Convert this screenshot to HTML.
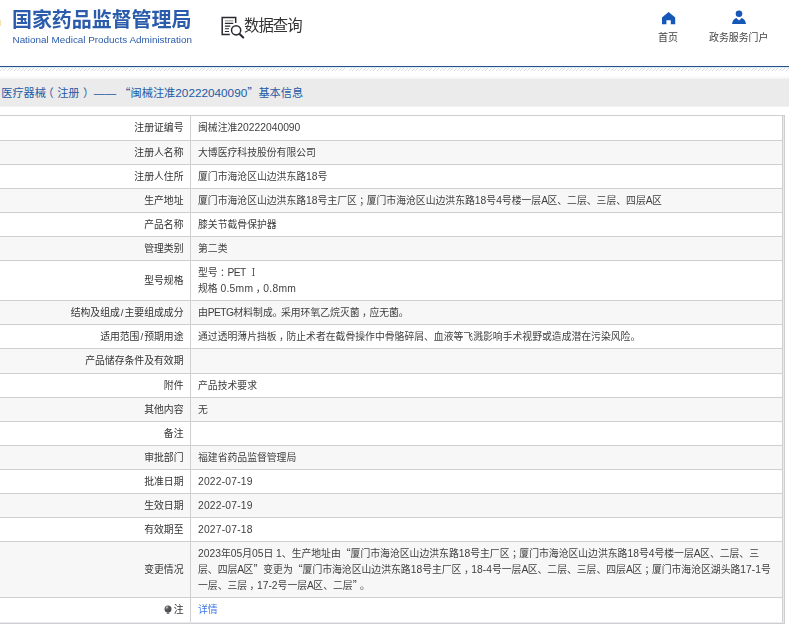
<!DOCTYPE html>
<html lang="zh-CN">
<head>
<meta charset="utf-8">
<title>国家药品监督管理局 数据查询</title>
<style>
html,body{margin:0;padding:0;background:#fff;}
body{width:789px;height:630px;overflow:hidden;position:relative;font-family:"Liberation Sans","Noto Sans CJK SC",sans-serif;color:#333;}
#wrap{position:absolute;left:0;top:0;width:789px;height:630px;opacity:.999;}
.abs{position:absolute;white-space:nowrap;}
.q{font-family:"Noto Sans CJK SC",sans-serif;}
#logo-cn{left:12px;top:5px;font-size:20px;font-weight:bold;color:#2b5cab;line-height:30px;letter-spacing:-0.07px;}
#logo-en{left:12.5px;top:33px;font-size:9.9px;color:#2b5cab;line-height:14px;}
#sj{left:244px;top:13.8px;font-size:15.4px;color:#333;line-height:24px;letter-spacing:-1px;}
#home-t{left:658px;top:29.8px;font-size:10px;color:#444;line-height:16px;}
#zw-t{left:709px;top:29.8px;font-size:9.9px;color:#444;line-height:16px;}
#blueline{left:0;top:66px;width:789px;height:1px;background:#2a5080;}
#hatch{left:0;top:68px;width:789px;height:3px;background:repeating-linear-gradient(135deg,#fff 0,#fff 1.55px,#dcdde0 1.55px,#dcdde0 2.25px,#fff 2.25px,#fff 2.47px);}
#tint{left:0;top:67px;width:789px;height:1px;background:#d8ecf9;}
#pre{left:0;top:76px;width:789px;height:3px;background:linear-gradient(#fff,#f3f3f3);}
#bar{left:0;top:79px;width:789px;height:27px;background:#ebebeb;border-bottom:1px solid #f1f1f1;}
#bar>span{position:absolute;left:1.2px;top:0;line-height:27px;font-size:11.2px;color:#1d5aa6;white-space:nowrap;}
#bar .n{font-size:11.75px;}
.r{position:absolute;left:0;width:782px;font-weight:400;font-size:9.83px;line-height:16px;white-space:nowrap;}
.r.g{background:#f7f7f7;}
.l{position:absolute;left:0;top:0;bottom:0;width:183.5px;display:flex;align-items:center;justify-content:flex-end;color:#333;}
.v{position:absolute;left:198px;top:0;bottom:0;right:0;display:flex;align-items:center;color:#404040;}
.r .n{font-size:10.3px;}
.r .d{letter-spacing:.2px;}
.r .u{font-size:10.3px;letter-spacing:-.6px;}
.r .m{letter-spacing:.3px;}
.rn{font-family:"Noto Serif CJK SC",serif;}
.c{margin-left:.25em;margin-right:-.25em;}
.pl{margin-left:-.3em;margin-right:.3em;}
.pr{margin-left:.3em;margin-right:-.3em;}
.p{margin-right:-1.7px;}
.pe{margin-left:2.5px;}
.s{padding:0 1px;}
.hb{position:absolute;left:0;width:785px;height:1px;background:#d0ced0;}
.vb{position:absolute;width:1px;background:#d0ced0;}
.bulb{display:inline-block;vertical-align:-1.6px;margin-right:1.2px;}
.r span span{line-height:0;}
a{color:#3b78e7;text-decoration:none;}
</style>
</head>
<body><div id="wrap">
<div class="abs" style="left:0;top:20px;width:1px;height:6px;background:#f3e2b3"></div>
<div class="abs" id="logo-cn">国家药品监督管理局</div>
<div class="abs" id="logo-en">National Medical Products Administration</div>
<svg class="abs" style="left:216.4px;top:10.3px" width="40" height="34" viewBox="0 0 40 34" fill="none" stroke="#2a2a32" stroke-width="1.5">
<path d="M19.7 13V7.6H6.2V24.6H13.8"/>
<path d="M8.9 10.8H17.3" stroke="#999" stroke-width="1.1"/><path d="M8.9 13.4H17.3M8.9 16.1H14.3M8.9 18.7H13M8.9 21.5H13" stroke-width="1.1"/>
<circle cx="20.1" cy="20.3" r="4.6"/><path d="M23.6 24.1L27.2 27.5" stroke-width="2.1" stroke-linecap="round"/>
</svg>
<div class="abs" id="sj">数据查询</div>
<svg class="abs" style="left:661px;top:10.5px" width="16" height="15" viewBox="0 0 16 15"><path d="M7.6 1.0L1.0 6.6V13.3h4.4V9.3h4.4V13.3h4.4V6.6Z" fill="#1558b8"/></svg>
<div class="abs" id="home-t">首页</div>
<svg class="abs" style="left:731px;top:10.4px" width="16" height="15" viewBox="0 0 16 15"><circle cx="8" cy="3.8" r="3.3" fill="#1558b8"/><path d="M1 14C1.3 10.5 3.2 8.6 5.3 8L8 10.6L10.7 8C12.8 8.6 14.7 10.5 15 14Z" fill="#1558b8"/></svg>
<div class="abs" id="zw-t">政务服务门户</div>
<div class="abs" id="blueline"></div>
<div class="abs" id="tint"></div>
<div class="abs" id="hatch"></div>
<div class="abs" id="pre"></div>
<div class="abs" id="bar"><span>医疗器械<span class="pl">（</span>注册<span class="pr">）</span> —— <span class="q">“</span>闽械注准<span class="n">20222040090</span><span class="q">”</span>基本信息</span></div>
<div class="r" style="top:116px;height:24px"><div class="l"><span>注册证编号</span></div><div class="v"><span>闽械注准<span class="n">20222040090</span></span></div></div>
<div class="r g" style="top:141px;height:23px"><div class="l"><span>注册人名称</span></div><div class="v"><span>大博医疗科技股份有限公司</span></div></div>
<div class="r" style="top:165px;height:23px"><div class="l"><span>注册人住所</span></div><div class="v"><span>厦门市海沧区山边洪东路<span class="n">18</span>号</span></div></div>
<div class="r g" style="top:189px;height:23px"><div class="l"><span>生产地址</span></div><div class="v"><span>厦门市海沧区山边洪东路<span class="n">18</span>号主厂区<span class="c">；</span>厦门市海沧区山边洪东路<span class="n">18</span>号<span class="n">4</span>号楼一层<span class="u">A</span>区、二层、三层、四层<span class="u">A</span>区</span></div></div>
<div class="r" style="top:213px;height:23px"><div class="l"><span>产品名称</span></div><div class="v"><span>膝关节截骨保护器</span></div></div>
<div class="r g" style="top:237px;height:23px"><div class="l"><span>管理类别</span></div><div class="v"><span>第二类</span></div></div>
<div class="r" style="top:261px;height:39px"><div class="l"><span>型号规格</span></div><div class="v"><span>型号<span class="c">：</span><span class="u">PET</span> <span class="rn">Ⅰ</span><br>规格 <span class="n m">0.5mm</span><span class="c">，</span><span class="n m">0.8mm</span></span></div></div>
<div class="r g" style="top:301px;height:23px"><div class="l"><span>结构及组成<span class="s">/</span>主要组成成分</span></div><div class="v"><span>由<span class="u">PETG</span>材料制成<span class="p">。</span>采用环氧乙烷灭菌<span class="c">，</span>应无菌。</span></div></div>
<div class="r" style="top:325px;height:23px"><div class="l"><span>适用范围<span class="s">/</span>预期用途</span></div><div class="v"><span>通过透明薄片挡板<span class="c">，</span>防止术者在截骨操作中骨骼碎屑、血液等飞溅影响手术视野或造成潜在污染风险。</span></div></div>
<div class="r g" style="top:349px;height:24px"><div class="l"><span>产品储存条件及有效期</span></div><div class="v"><span></span></div></div>
<div class="r" style="top:374px;height:23px"><div class="l"><span>附件</span></div><div class="v"><span>产品技术要求</span></div></div>
<div class="r g" style="top:398px;height:23px"><div class="l"><span>其他内容</span></div><div class="v"><span>无</span></div></div>
<div class="r" style="top:422px;height:23px"><div class="l"><span>备注</span></div><div class="v"><span></span></div></div>
<div class="r g" style="top:446px;height:23px"><div class="l"><span>审批部门</span></div><div class="v"><span>福建省药品监督管理局</span></div></div>
<div class="r" style="top:470px;height:23px"><div class="l"><span>批准日期</span></div><div class="v"><span><span class="n d">2022-07-19</span></span></div></div>
<div class="r g" style="top:494px;height:23px"><div class="l"><span>生效日期</span></div><div class="v"><span><span class="n d">2022-07-19</span></span></div></div>
<div class="r" style="top:518px;height:23px"><div class="l"><span>有效期至</span></div><div class="v"><span><span class="n d">2027-07-18</span></span></div></div>
<div class="r g" style="top:542px;height:55px"><div class="l"><span>变更情况</span></div><div class="v"><span><span class="n">2023</span>年<span class="n">05</span>月<span class="n">05</span>日 <span class="n">1</span>、生产地址由<span class="q">“</span>厦门市海沧区山边洪东路<span class="n">18</span>号主厂区<span class="c">；</span>厦门市海沧区山边洪东路<span class="n">18</span>号<span class="n">4</span>号楼一层<span class="u">A</span>区、二层、三<br>层、四层<span class="u">A</span>区<span class="q">”</span>变更为<span class="q">“</span>厦门市海沧区山边洪东路<span class="n">18</span>号主厂区<span class="c">，</span><span class="n">18-4</span>号一层<span class="u">A</span>区、二层、三层、四层<span class="u">A</span>区<span class="c">；</span>厦门市海沧区湖头路<span class="n">17-1</span>号<br>一层、三层<span class="c">，</span><span class="n">17-2</span>号一层<span class="u">A</span>区、二层<span class="q">”</span><span class="pe">。</span></span></div></div>
<div class="r" style="top:598px;height:24px"><div class="l"><span><svg class="bulb" width="8" height="10" viewBox="0 0 8 10"><defs><radialGradient id="bg" cx="35%" cy="30%" r="75%"><stop offset="0" stop-color="#8a8a8a"/><stop offset=".45" stop-color="#555"/><stop offset="1" stop-color="#474b55"/></radialGradient></defs><circle cx="4" cy="3.9" r="3.5" fill="url(#bg)"/><path d="M2.2 3.4A2 2 0 0 1 3.8 1.9" stroke="#f0f0f0" stroke-width=".8" fill="none"/><rect x="2.7" y="7.3" width="2.6" height="1.7" fill="#777"/></svg>注</span></div><div class="v"><span><a>详情</a></span></div></div>
<div class="hb" style="top:115px"></div>
<div class="hb" style="top:140px"></div>
<div class="hb" style="top:164px"></div>
<div class="hb" style="top:188px"></div>
<div class="hb" style="top:212px"></div>
<div class="hb" style="top:236px"></div>
<div class="hb" style="top:260px"></div>
<div class="hb" style="top:300px"></div>
<div class="hb" style="top:324px"></div>
<div class="hb" style="top:348px"></div>
<div class="hb" style="top:373px"></div>
<div class="hb" style="top:397px"></div>
<div class="hb" style="top:421px"></div>
<div class="hb" style="top:445px"></div>
<div class="hb" style="top:469px"></div>
<div class="hb" style="top:493px"></div>
<div class="hb" style="top:517px"></div>
<div class="hb" style="top:541px"></div>
<div class="hb" style="top:597px"></div>
<div class="vb" style="left:190px;top:115px;height:507px"></div>
<div class="vb" style="left:782px;top:115px;height:509px"></div>
<div class="vb" style="left:783px;top:116px;height:507px;background:#e9e9ee"></div>
<div class="vb" style="left:784px;top:115px;height:509px"></div>
<div class="hb" style="top:622px;background:#e9e9ee;width:783px"></div>
<div class="hb" style="top:623px"></div>
</div></body>
</html>
